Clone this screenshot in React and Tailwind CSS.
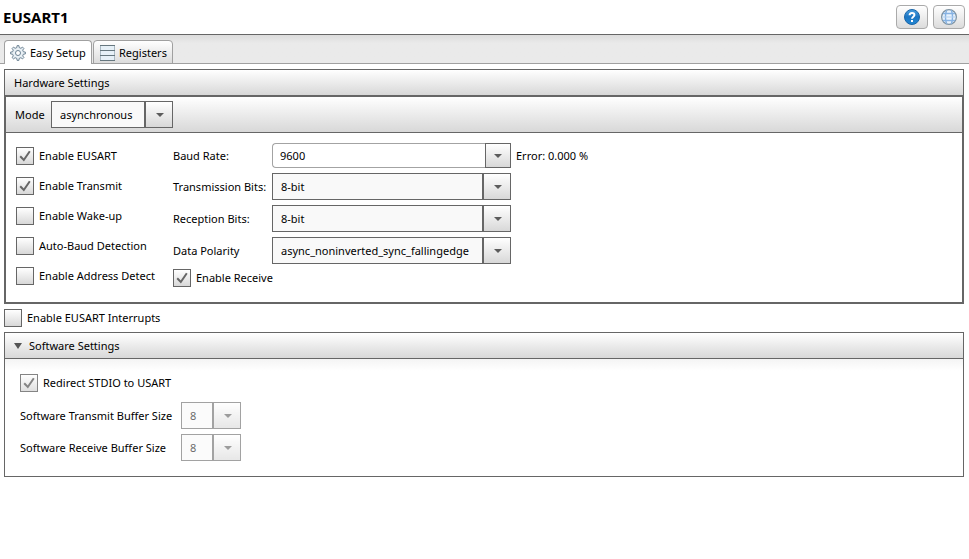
import { useState } from 'react';

const MODES = ['asynchronous', 'synchronous'];
const BITS = ['8-bit', '9-bit'];
const BUFFER_SIZES = ['8', '16', '32', '64'];
const POLARITIES = ['async_noninverted_sync_fallingedge', 'async_inverted_sync_risingedge'];

function GearIcon() {
  return (
    <svg width="16" height="16" viewBox="0 0 16 16" fill="none" stroke="#6d8394" aria-hidden="true">
      <path
        d="M6.8 2.6 L7.1 0.6 H8.9 L9.2 2.6 L10.9 3.3 L12.5 2.1 L13.9 3.5 L12.7 5.1 L13.4 6.8 L15.4 7.1 V8.9 L13.4 9.2 L12.7 10.9 L13.9 12.5 L12.5 13.9 L10.9 12.7 L9.2 13.4 L8.9 15.4 H7.1 L6.8 13.4 L5.1 12.7 L3.5 13.9 L2.1 12.5 L3.3 10.9 L2.6 9.2 L0.6 8.9 V7.1 L2.6 6.8 L3.3 5.1 L2.1 3.5 L3.5 2.1 L5.1 3.3 Z"
        fill="#e9f0f5"
      />
      <circle cx="8" cy="8" r="2.5" fill="#fff" />
    </svg>
  );
}

function RegistersIcon() {
  return (
    <svg width="15" height="16" viewBox="0 0 15 16" aria-hidden="true">
      {[0.5, 5.5, 10.5].map((y) => (
        <rect key={y} x="0.5" y={y} width="14" height="5" fill="#e6f0f7" stroke="#a9b8c2" />
      ))}
      <path d="M0 0.5H15M0 5.5H15M0 10.5H15M0 15.5H15" stroke="#66777f" />
    </svg>
  );
}

function HelpIcon() {
  return (
    <svg width="16" height="16" viewBox="0 0 16 16" aria-hidden="true">
      <defs>
        <linearGradient id="help-fill" x1="0" y1="0" x2="0" y2="1">
          <stop offset="0" stopColor="#4b9fdf" />
          <stop offset="0.5" stopColor="#1c76c4" />
          <stop offset="1" stopColor="#2387d2" />
        </linearGradient>
      </defs>
      <circle cx="8" cy="8" r="7.5" fill="url(#help-fill)" stroke="#1b66a8" />
      <path
        d="M5.6 6.2 C5.6 3.2 10.4 3.2 10.4 5.9 C10.4 7.7 8 7.7 8 9.8"
        fill="none"
        stroke="#fff"
        strokeWidth="2"
      />
      <rect x="7" y="11" width="2" height="2" fill="#fff" />
    </svg>
  );
}

function GlobeIcon() {
  return (
    <svg width="16" height="16" viewBox="0 0 16 16" fill="none" aria-hidden="true">
      <circle cx="8" cy="8" r="7.4" fill="#e8f2fc" stroke="#7d919f" strokeWidth="1.2" />
      <g stroke="#86b2e2">
        <path d="M5.6 1.2C4.2 5.4 4.2 10.6 5.6 14.8M10.4 1.2C11.8 5.4 11.8 10.6 10.4 14.8" strokeWidth="1.4" />
        <path d="M2 4.5H14M2 11.5H14" strokeWidth="1.4" />
        <path d="M1 8H15" stroke="#b3d0ef" />
      </g>
    </svg>
  );
}

function Arrow() {
  return (
    <svg width="8" height="4" viewBox="0 0 8 4" fill="#5c5c5c" aria-hidden="true">
      <path d="M0 0H8L4 4Z" />
    </svg>
  );
}

function Checkbox({ label, defaultChecked = false, dim = false }) {
  return (
    <label className="flex h-[18px] w-fit items-center gap-[5px] whitespace-nowrap">
      <span className={`grid shrink-0 place-items-center ${dim ? 'opacity-80' : ''}`}>
        <input
          type="checkbox"
          defaultChecked={defaultChecked}
          className="peer col-start-1 row-start-1 size-[18px] appearance-none border border-[#666] bg-linear-to-b from-white to-[#d8d8d8]"
        />
        <svg
          width="12"
          height="12"
          viewBox="0 0 12 12"
          fill="none"
          stroke="#666"
          strokeWidth="2"
          className="pointer-events-none invisible col-start-1 row-start-1 peer-checked:visible"
          aria-hidden="true"
        >
          <path d="M1.2 6.2 L4.8 10 L10.8 1.2" />
        </svg>
      </span>
      {label}
    </label>
  );
}

function Select({ id, options, className, disabled = false }) {
  return (
    <div className={`grid h-[27px] ${className} ${disabled ? 'opacity-60' : ''}`}>
      <select
        id={id}
        disabled={disabled}
        className="col-start-1 row-start-1 w-full appearance-none border border-[#666] bg-[#f9f9f9] pr-7 pl-2"
      >
        {options.map((o) => (
          <option key={o}>{o}</option>
        ))}
      </select>
      <span className="pointer-events-none col-start-1 row-start-1 flex w-[29px] items-center justify-center justify-self-end border border-l-2 border-[#666] bg-linear-to-b from-white to-[#d8d8d8] pl-0.5">
        <Arrow />
      </span>
    </div>
  );
}

function BaudRate() {
  const [baud, setBaud] = useState('9600');
  return (
    <div className="flex h-[25px] w-[239px]">
      <input
        id="baud"
        value={baud}
        onChange={(e) => setBaud(e.target.value)}
        className="min-w-0 flex-1 rounded-l-sm border border-r-0 border-[#a3a3a3] bg-white px-[7px]"
      />
      <button
        type="button"
        aria-label="Baud rates"
        className="flex w-[26px] items-center justify-center border border-[#666] bg-linear-to-b from-white to-[#d8d8d8]"
      >
        <Arrow />
      </button>
    </div>
  );
}

function ToolButton({ label, children }) {
  return (
    <button
      type="button"
      aria-label={label}
      className="flex h-6 w-8 items-center justify-center rounded-sm border border-[#aaa] bg-linear-to-b from-white to-[#dcdcdc]"
    >
      {children}
    </button>
  );
}

function HardwareSettings() {
  return (
    <section className="border border-[#666]">
      <h2 className="flex h-[26px] items-center border-b border-[#666] bg-linear-to-b from-white to-[#d8d8d8] px-[9px]">
        Hardware Settings
      </h2>
      <div className="border border-[#666]">
        <div className="flex h-9 items-center gap-1 border-b border-[#666] bg-linear-to-b from-white to-[#d8d8d8] px-[9px]">
          <label htmlFor="mode" className="w-8">Mode</label>
          <Select id="mode" options={MODES} className="w-[122px]" />
        </div>
        <div className="flex items-start px-[10px] pt-[10px] pb-[15px]">
          <div className="flex w-[157px] flex-col gap-3 pt-1">
            <Checkbox label="Enable EUSART" defaultChecked />
            <Checkbox label="Enable Transmit" defaultChecked />
            <Checkbox label="Enable Wake-up" />
            <Checkbox label="Auto-Baud Detection" />
            <Checkbox label="Enable Address Detect" />
          </div>
          <div className="flex flex-col gap-[5px]">
            <div className="grid grid-cols-[99px_auto_auto] items-center justify-start gap-y-[5px] whitespace-nowrap">
              <label htmlFor="baud">Baud Rate:</label>
              <BaudRate />
              <output htmlFor="baud" className="pl-[5px]">Error: 0.000 %</output>
              <label htmlFor="tx-bits">Transmission Bits:</label>
              <Select id="tx-bits" options={BITS} className="col-span-2 w-[239px]" />
              <label htmlFor="rx-bits">Reception Bits:</label>
              <Select id="rx-bits" options={BITS} className="col-span-2 w-[239px]" />
              <label htmlFor="polarity">Data Polarity</label>
              <Select id="polarity" options={POLARITIES} className="col-span-2 w-[239px]" />
            </div>
            <Checkbox label="Enable Receive" defaultChecked />
          </div>
        </div>
      </div>
    </section>
  );
}

function SoftwareSettings() {
  const [open, setOpen] = useState(true);
  return (
    <section className="border border-[#666]">
      <h2>
        <button
          type="button"
          aria-expanded={open}
          onClick={() => setOpen(!open)}
          className="flex h-[26px] w-full items-center gap-[7px] border-b border-[#666] bg-linear-to-b from-white to-[#d8d8d8] px-[9px]"
        >
          <svg width="8" height="6" viewBox="0 0 8 6" fill="#555" aria-hidden="true">
            <path d="M0 0H8L4 6Z" />
          </svg>
          Software Settings
        </button>
      </h2>
      {open && (
        <div className="flex flex-col gap-[10px] bg-linear-to-b from-[#f4f4f4] to-white to-10% px-[15px] pt-[15px] pb-[15px]">
          <Checkbox label="Redirect STDIO to USART" defaultChecked dim />
          <div className="grid grid-cols-[161px_auto] items-center justify-start gap-y-[5px] whitespace-nowrap">
            <label htmlFor="tx-buffer">Software Transmit Buffer Size</label>
            <Select id="tx-buffer" options={BUFFER_SIZES} className="w-[60px]" disabled />
            <label htmlFor="rx-buffer">Software Receive Buffer Size</label>
            <Select id="rx-buffer" options={BUFFER_SIZES} className="w-[60px]" disabled />
          </div>
        </div>
      )}
    </section>
  );
}

export default function App() {
  return (
    <div className="min-h-screen bg-white font-['Noto_Sans','Open_Sans',sans-serif] text-[11px] leading-4 text-black">
      <header className="flex h-[35px] items-center justify-between border-b border-[#666] pr-1 pl-[3px]">
        <h1 className="text-[15px] font-bold">EUSART1</h1>
        <div className="flex gap-[5px]">
          <ToolButton label="Help">
            <HelpIcon />
          </ToolButton>
          <ToolButton label="Web">
            <GlobeIcon />
          </ToolButton>
        </div>
      </header>

      <nav className="flex h-[29px] items-end gap-px border-b border-[#a0a0a0] bg-linear-to-b from-[#dcdcdc] to-[#eaeaea] to-30% px-1" role="tablist">
        <button
          type="button"
          role="tab"
          aria-selected="true"
          className="-mb-px flex h-6 w-[88px] items-center gap-1 rounded-t-sm border border-b-0 border-[#a0a0a0] bg-white pl-[5px] whitespace-nowrap"
        >
          <GearIcon />
          Easy Setup
        </button>
        <button
          type="button"
          role="tab"
          aria-selected="false"
          className="-mb-px flex h-6 w-20 items-center gap-1 rounded-t-sm border border-[#a0a0a0] bg-linear-to-b from-white to-[#dcdcdc] pt-0.5 pl-[6px] whitespace-nowrap"
        >
          <RegistersIcon />
          Registers
        </button>
      </nav>

      <main className="flex flex-col gap-[5px] pt-[5px] pr-[5px] pl-1">
        <HardwareSettings />
        <Checkbox label="Enable EUSART Interrupts" />
        <SoftwareSettings />
      </main>
    </div>
  );
}
